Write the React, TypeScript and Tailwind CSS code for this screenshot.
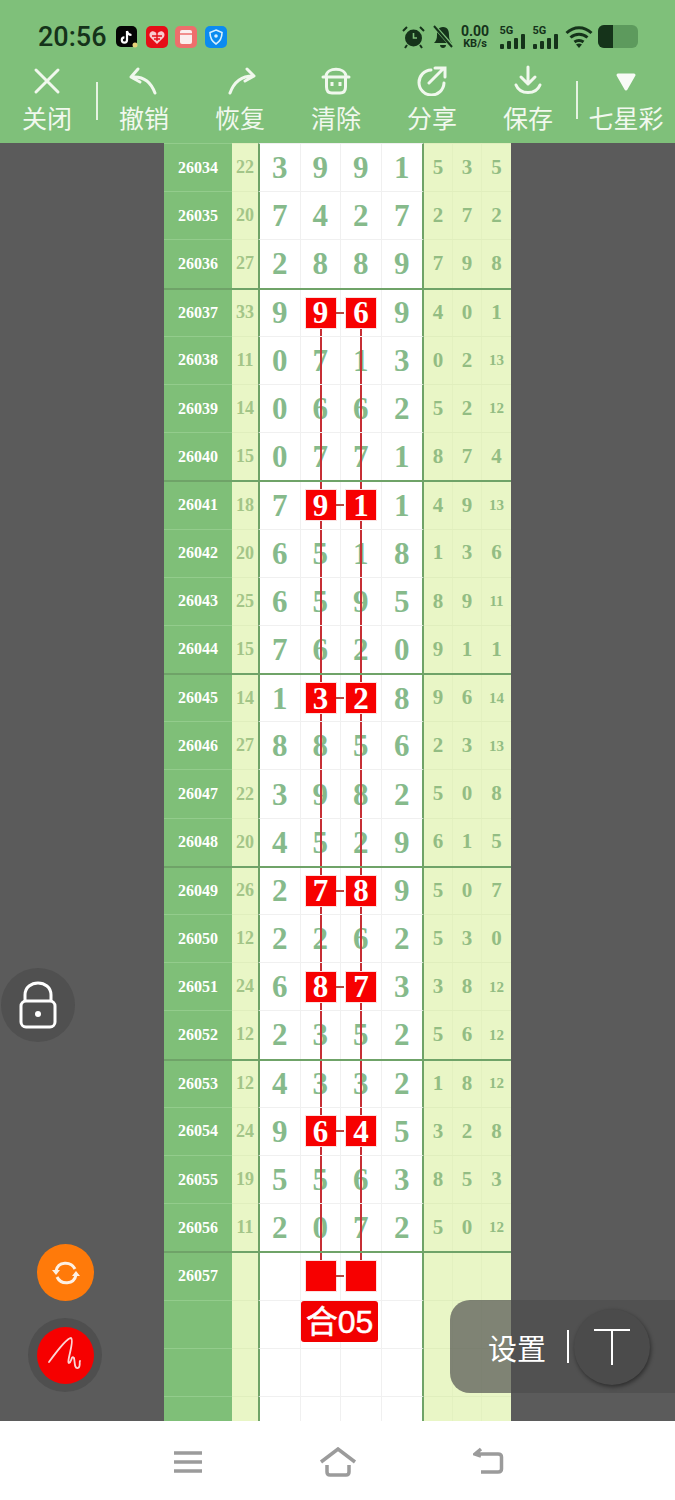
const rows = [
  ["26034", "22", "3991", "5", "3", "5"],
  ["26035", "20", "7427", "2", "7", "2"],
  ["26036", "27", "2889", "7", "9", "8"],
  ["26037", "33", "9969", "4", "0", "1"],
  ["26038", "11", "0713", "0", "2", "13"],
  ["26039", "14", "0662", "5", "2", "12"],
  ["26040", "15", "0771", "8", "7", "4"],
  ["26041", "18", "7911", "4", "9", "13"],
  ["26042", "20", "6518", "1", "3", "6"],
  ["26043", "25", "6595", "8", "9", "11"],
  ["26044", "15", "7620", "9", "1", "1"],
  ["26045", "14", "1328", "9", "6", "14"],
  ["26046", "27", "8856", "2", "3", "13"],
  ["26047", "22", "3982", "5", "0", "8"],
  ["26048", "20", "4529", "6", "1", "5"],
  ["26049", "26", "2789", "5", "0", "7"],
  ["26050", "12", "2262", "5", "3", "0"],
  ["26051", "24", "6873", "3", "8", "12"],
  ["26052", "12", "2352", "5", "6", "12"],
  ["26053", "12", "4332", "1", "8", "12"],
  ["26054", "24", "9645", "3", "2", "8"],
  ["26055", "19", "5563", "8", "5", "3"],
  ["26056", "11", "2072", "5", "0", "12"],
  ["26057", "", "    ", "", "", ""],
  ["", "", "    ", "", "", ""],
  ["", "", "    ", "", "", ""],
  ["", "", "    ", "", "", ""],
];

const redRows = [3, 7, 11, 15, 17, 20, 23];
const groupStarts = [3, 7, 11, 15, 19, 23];

const ic = "fill-none stroke-[#f1f8ee] stroke-[3px]";

const tools = [
  { label: "撤销", icon: <path d="M11 5 L4 13 L13 18 M5 13 C17 12 24 18 28 29" className={ic} strokeLinecap="round" strokeLinejoin="round" /> },
  { label: "恢复", icon: <path d="M24 5 L31 12 L22 17 M30 12 C19 12 11 18 7 29" className={ic} strokeLinecap="round" strokeLinejoin="round" /> },
  {
    label: "清除",
    icon: (
      <>
        <path d="M7 12 C8 3 26 3 27 12" className={ic} />
        <path d="M4 13 H30" className={ic} strokeLinecap="round" />
        <path d="M7.5 14 V23 C7.5 27 9.5 29 13 29 H21 C24.5 29 26.5 27 26.5 23 V14" className={ic} />
        <path d="M13 18 V22 M21 18 V22" className={ic} />
      </>
    ),
  },
  { label: "分享", icon: <path d="M16 6 A12.5 12.5 0 1 0 29 19 M14 19 L29 4 M20 4 H30 V13" className={ic} strokeLinecap="round" /> },
  { label: "保存", icon: <path d="M17 3 V20 M10 13 L17 20 L24 13 M5 21 C9 31 25 31 29 21" className={ic} strokeLinecap="round" strokeLinejoin="round" /> },
];

function Tool({ label, icon }: { label: string; icon: React.ReactNode }) {
  return (
    <div className="w-[96px] flex flex-col items-center">
      <svg width="34" height="32" viewBox="0 0 34 32" className="mt-[1px]">{icon}</svg>
      <span className="text-[25px] leading-[38px] mt-[2px]">{label}</span>
    </div>
  );
}

function Signal() {
  return (
    <div className="relative w-[27px] h-[24px]">
      <span className="absolute left-0 top-0 text-[11px] leading-[11px] font-bold">5G</span>
      <div className="absolute left-0 bottom-0 flex items-end gap-[3px]">
        <div className="w-[4px] h-[5px] bg-[#15331a] rounded-[1px]" />
        <div className="w-[4px] h-[8px] bg-[#15331a] rounded-[1px]" />
        <div className="w-[4px] h-[11px] bg-[#15331a] rounded-[1px]" />
        <div className="w-[4px] h-[15px] bg-[#15331a] rounded-[1px]" />
      </div>
    </div>
  );
}

function StatusBar() {
  return (
    <div className="h-[63px] pt-[23px] flex items-start text-[#15331a] font-['Roboto',sans-serif]">
      <span className="ml-[38px] text-[27px] leading-[28px] font-medium w-[78px]">20:56</span>
      <div className="flex gap-[7.5px] mt-[3px]">
        <svg width="22" height="22" viewBox="0 0 22 22">
          <rect width="21" height="21" rx="5" fill="#050505" />
          <path d="M11 5 V14 A2.6 2.6 0 1 1 8.4 11.4 M11 5 C11.5 7.5 13 8.8 15.5 9" fill="none" stroke="#fff" strokeWidth="2.2" />
          <circle cx="19" cy="19" r="2.5" fill="#e7d27a" />
        </svg>
        <svg width="22" height="22" viewBox="0 0 22 22">
          <rect width="22" height="22" rx="5" fill="#e60d17" />
          <path d="M11 18 L4 11 C2 7 6 4 9 6 L11 7.5 L13 6 C16 4 20 7 18 11 Z" fill="#f9c9ce" />
          <path d="M6 10 H16 M8 13 H14 M11 7 V15" stroke="#e60d17" strokeWidth="1.4" />
        </svg>
        <svg width="22" height="22" viewBox="0 0 22 22">
          <rect width="22" height="22" rx="5" fill="#ee6e6c" />
          <rect x="5" y="4" width="12" height="14" rx="2" fill="#fbeeee" />
          <path d="M5 8 H17" stroke="#ee6e6c" strokeWidth="1.5" />
        </svg>
        <svg width="22" height="22" viewBox="0 0 22 22">
          <rect width="22" height="22" rx="5" fill="#0b8bf0" />
          <path d="M11 4 L17 6.5 C17 12 15 15.5 11 18 C7 15.5 5 12 5 6.5 Z" fill="none" stroke="#d8f0ff" strokeWidth="1.6" />
          <circle cx="11" cy="10" r="1.8" fill="#d8f0ff" />
        </svg>
      </div>
      <div className="ml-[175px] flex items-start mt-[2px]">
        <svg width="23" height="24" viewBox="0 0 23 24">
          <circle cx="11.5" cy="13" r="8.5" fill="#15331a" />
          <path d="M11.5 8 V13 H15" fill="none" stroke="#7fc07a" strokeWidth="1.6" />
          <path d="M1 6 L5 2 M22 6 L18 2 M5 20 L3 23 M18 20 L20 23" stroke="#15331a" strokeWidth="2" />
        </svg>
        <svg width="22" height="24" viewBox="0 0 22 24" className="ml-[7px]">
          <path d="M11 2 C6 2 5 6 5 10 C5 14 4 16 2 18 H20 C18 16 17 14 17 10 C17 6 16 2 11 2 Z M8 20 H14 C14 24 8 24 8 20 Z" fill="#15331a" />
          <path d="M3 2 L20 21" stroke="#7fc07a" strokeWidth="4" />
          <path d="M2 1 L20 22" stroke="#15331a" strokeWidth="2" />
        </svg>
        <div className="ml-[6px] w-[31px] flex flex-col items-center font-bold">
          <span className="text-[14px] leading-[13px]">0.00</span>
          <span className="text-[11px] leading-[11px]">KB/s</span>
        </div>
        <div className="ml-[9px]"><Signal /></div>
        <div className="ml-[6px]"><Signal /></div>
        <svg width="28" height="24" viewBox="0 0 28 24" className="ml-[5px]">
          <path d="M1.5 8 C9 1 19 1 26.5 8 M5.5 12.5 C10.5 8 17.5 8 22.5 12.5 M9.5 17 C12 15 16 15 18.5 17" fill="none" stroke="#15331a" strokeWidth="3" />
          <path d="M11 19.5 L14 23 L17 19.5 C15 18.3 13 18.3 11 19.5 Z" fill="#15331a" />
        </svg>
        <div className="ml-[5px] w-[40px] h-[23px] rounded-[6px] bg-[#5d9a5d] overflow-hidden">
          <div className="w-[15px] h-full bg-[#15331a]" />
        </div>
      </div>
    </div>
  );
}

function Toolbar() {
  return (
    <div className="flex items-start h-[80px] text-[#f1f8ee] font-['Noto_Sans_CJK_SC',sans-serif]">
      <div className="w-[94px] flex flex-col items-center">
        <svg width="34" height="32" viewBox="0 0 34 32" className="mt-[2px]">
          <path d="M6 5 L28 27 M28 5 L6 27" className={ic} strokeLinecap="round" />
        </svg>
        <span className="text-[25px] leading-[38px] mt-[1px]">关闭</span>
      </div>
      <div className="w-[2px] h-[38px] mt-[19px] ml-[2px] -mr-[2px] bg-[#e6f3e2]" />
      {tools.map((t) => (
        <Tool key={t.label} label={t.label} icon={t.icon} />
      ))}
      <div className="w-[2px] h-[38px] mt-[18px] bg-[#e6f3e2]" />
      <div className="w-[96px] flex flex-col items-center">
        <svg width="22" height="32" viewBox="0 0 22 32" className="mt-[1px]">
          <path d="M3 11 H19 L11 25 Z" fill="#f8fbf6" stroke="#f8fbf6" strokeWidth="3" strokeLinejoin="round" />
        </svg>
        <span className="text-[25px] leading-[38px] mt-[2px] whitespace-nowrap">七星彩</span>
      </div>
    </div>
  );
}

function MainCell({ value, col, index }: { value: string; col: number; index: number }) {
  const isRed = redRows.includes(index) && (col === 1 || col === 2);
  const hasLine = index >= 3 && index <= 23 && (col === 1 || col === 2);
  const lineClass = index === 3 ? "top-1/2 bottom-0" : index === 23 ? "top-0 bottom-1/2" : "top-0 bottom-0";
  return (
    <div className="relative w-[41px] flex items-center justify-center border-r border-[#f0f0f0] last:border-r-0">
      <span className="text-[31px] leading-none font-bold text-[#86ba8b]">{value.trim()}</span>
      {hasLine && <div className={`absolute left-[19px] w-[2px] bg-[#c62f35] ${lineClass}`} />}
      {isRed && (
        <div className="absolute z-10 left-[5px] top-1/2 -translate-y-1/2 w-[30px] h-[30px] bg-[#f70000] shadow-[0_0_0_1px_#fbe0e0] flex items-center justify-center text-white text-[31px] leading-none font-bold">
          {value.trim()}
        </div>
      )}
      {isRed && col === 1 && <div className="absolute z-10 -right-[4px] top-1/2 -translate-y-1/2 w-[8px] h-[2px] bg-[#b5483f]" />}
    </div>
  );
}

function Row({ r, index }: { r: string[]; index: number }) {
  const group = groupStarts.includes(index);
  return (
    <div className="flex h-[48.2px] shrink-0 font-['Liberation_Serif',serif]">
      <div className={`w-[68px] flex items-center justify-center bg-[#7fbf78] text-white text-[16px] font-bold ${group ? "border-t-2 border-[#6fa368]" : "border-t border-[#93cc8c]"}`}>
        {r[0]}
      </div>
      <div className={`w-[26px] flex items-center justify-center bg-[#e9f6c6] text-[#a3c588] text-[18px] font-bold ${group ? "border-t-2 border-[#6fa368]" : "border-t border-[#e0eebd]"}`}>
        {r[1]}
      </div>
      <div className={`w-[166px] flex bg-white border-x-2 border-x-[#6fa368] ${group ? "border-t-2 border-t-[#6fa368]" : "border-t border-t-[#f0f0f0]"}`}>
        {r[2].split("").map((v, col) => (
          <MainCell key={col} value={v} col={col} index={index} />
        ))}
      </div>
      <div className={`w-[87px] flex bg-[#e9f6c6] text-[#93bd83] font-bold ${group ? "border-t-2 border-[#6fa368]" : "border-t border-[#e0eebd]"}`}>
        {r.slice(3).map((v, i) => (
          <div key={i} className={`w-[29px] flex items-center justify-center border-r border-[#e3f1c0] last:border-r-0 ${v.length > 1 ? "text-[15px]" : "text-[21px]"}`}>
            {v}
          </div>
        ))}
      </div>
    </div>
  );
}

export default function App() {
  return (
    <div className="relative w-[675px] h-[1500px] overflow-hidden flex flex-col bg-white">
      <div className="bg-[#7fc07a] h-[143px] shrink-0">
        <StatusBar />
        <Toolbar />
      </div>

      <div className="relative flex-1 bg-[#5b5b5b] overflow-hidden pl-[164px]">
        <div className="h-full flex flex-col">
          {rows.map((r, i) => (
            <Row key={i} r={r} index={i} />
          ))}
        </div>

        {/* 合05 sits across the empty rows */}
        <div className="absolute z-20 left-[301px] top-[1158px] w-[77px] h-[41px] rounded-[3px] bg-[#f20000] text-white text-[32px] leading-[42px] text-center [-webkit-text-stroke:0.5px_white] font-['Liberation_Sans','Noto_Sans_CJK_SC',sans-serif]">
          合05
        </div>

        {/* lock */}
        <div className="absolute left-[1px] top-[825px] w-[74px] h-[74px] rounded-full bg-[#505050] flex items-center justify-center">
          <svg width="38" height="50" viewBox="0 0 38 50" className="fill-none stroke-white stroke-[3px]">
            <path d="M6 21 V15 C6 -1 32 -1 32 15 V21" />
            <rect x="2" y="21" width="34" height="26" rx="5" />
            <circle cx="19" cy="34" r="3" className="fill-white stroke-none" />
          </svg>
        </div>

        {/* refresh */}
        <div className="absolute left-[37px] top-[1101px] w-[57px] h-[57px] rounded-full bg-[#ff7a0a] flex items-center justify-center">
          <svg width="30" height="30" viewBox="0 0 30 30" className="fill-none stroke-[#fdf0e4] stroke-[3px]">
            <path d="M5 13 C7 3 20 3 24 11 M25 17 C23 27 10 27 6 19" />
            <path d="M1 12 L9 12 L5 17 Z M29 18 L21 18 L25 13 Z" className="fill-[#fdf0e4] stroke-none" />
          </svg>
        </div>

        {/* pen */}
        <div className="absolute left-[28px] top-[1175px] w-[74px] h-[74px] rounded-full bg-[#4f4f4f] flex items-center justify-center">
          <div className="w-[57px] h-[57px] rounded-full bg-[#f60000] flex items-center justify-center">
            <svg width="36" height="38" viewBox="0 0 36 38" className="fill-none stroke-[#fbd5d5] stroke-[1.8px]">
              <path d="M2 26 C10 15 20 2 24 2 C28 4 19 27 22 27 C25 26 24 19 27 22 C28 25 27 33 31 32 C34 31 32 26 33 25" strokeLinecap="round" />
            </svg>
          </div>
        </div>

        {/* settings panel */}
        <div className="absolute z-30 left-[450px] top-[1157px] w-[225px] h-[93px] rounded-l-[20px] bg-[rgba(76,76,76,0.68)] text-white flex items-center font-['Noto_Sans_CJK_SC',sans-serif]">
          <span className="ml-[38px] text-[29px] leading-[40px]">设置</span>
          <div className="ml-[21px] w-[2px] h-[33px] bg-white" />
          <div className="ml-[5px] w-[76px] h-[76px] rounded-full bg-[#4b4b4b] shadow-[1px_2px_4px_rgba(0,0,0,0.45)] flex items-center justify-center">
            <svg width="38" height="38" viewBox="0 0 38 38" className="stroke-white stroke-2">
              <path d="M1 2 H37 M19 2 V37" />
            </svg>
          </div>
        </div>
      </div>

      <div className="h-[79px] shrink-0 bg-white relative flex items-center">
        <svg width="30" height="24" viewBox="0 0 30 24" className="ml-[173px] mt-[2px] stroke-[#9b9b9b] stroke-[3.5px]">
          <path d="M1 3 H29 M1 12 H29 M1 21 H29" />
        </svg>
        <svg width="38" height="30" viewBox="0 0 38 30" className="ml-[116px] mt-[2px] fill-none stroke-[#9b9b9b] stroke-[3.5px]">
          <path d="M2 15 L19 2 L36 15 M8 18 V25 C8 27 9 28 11 28 H27 C29 28 30 27 30 25 V18" />
        </svg>
        <svg width="32" height="28" viewBox="0 0 32 28" className="ml-[116px] mt-[1px] fill-none stroke-[#9b9b9b] stroke-[3.5px]">
          <path d="M8 2 L2 7 L8 9 M3 7 H25 C27 7 28.500 8 28.500 10 V22 C28.500 24 27 25 25 25 H8" />
        </svg>
      </div>
    </div>
  );
}
